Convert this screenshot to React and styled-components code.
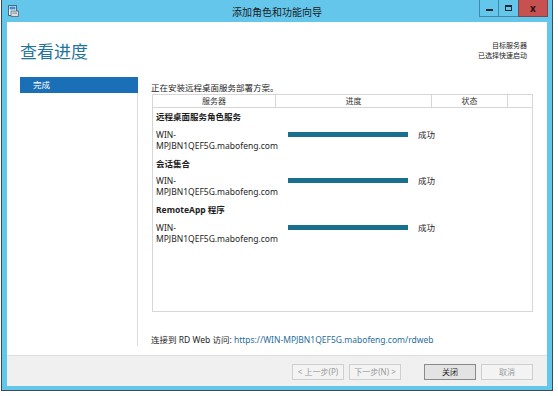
import React from "react";
import styled, { createGlobalStyle } from "styled-components";

const GlobalStyle = createGlobalStyle`
  html, body {
    margin: 0;
    padding: 0;
    background: #ffffff;
  }
  body {
    font-family: "Noto Sans", "Noto Sans CJK SC", sans-serif;
    color: #1e1e1e;
  }
`;

// Window frame
const Window = styled.div`
  width: 550px;
  height: 390px;
  margin-left: 1px;
  border: 1px solid #3d4a50;
  border-top: none;
  background: #65c6ec;
  display: flex;
  flex-direction: column;
`;

const TitleBar = styled.div`
  height: 22px;
  display: grid;
  grid-template-columns: 1fr auto 1fr;
  align-items: start;
`;

const TitleIcon = styled.div`
  padding: 5px 0 0 6px;
  display: flex;
`;

const TitleText = styled.div`
  font-size: 10px;
  line-height: 24px;
  color: #1c1c1c;
`;

const Controls = styled.div`
  display: flex;
  justify-content: flex-end;
  margin-right: 4px;
`;

const CtrlButton = styled.div`
  width: ${({ w }) => w}px;
  height: 17px;
  display: flex;
  align-items: center;
  justify-content: center;
  background: ${({ close }) => (close ? "#c75050" : "transparent")};
  border-left: 1px solid rgba(20, 60, 80, 0.45);
  border-bottom: 1px solid rgba(20, 60, 80, 0.45);
  box-sizing: border-box;
  &:last-child {
    border-right: 1px solid rgba(20, 60, 80, 0.45);
  }
`;

const MinIcon = styled.span`
  width: 7px;
  height: 2px;
  margin-top: 4px;
  background: #1b2a30;
`;

const MaxIcon = styled.span`
  width: 7px;
  height: 6px;
  border: 1px solid #1b2a30;
  border-top-width: 2px;
  box-sizing: border-box;
`;

const CloseX = styled.span`
  font-size: 10px;
  font-weight: 700;
  color: #2a1414;
  line-height: 1;
`;

// Client area
const Client = styled.div`
  flex: 1;
  margin: 0 5px 4px 5px;
  background: #ffffff;
  display: flex;
  flex-direction: column;
`;

const Header = styled.div`
  height: 55px;
  display: flex;
  justify-content: space-between;
  padding: 0 20px 0 13px;
  box-sizing: border-box;
`;

const Heading = styled.h1`
  margin: 21px 0 0 0;
  font-size: 17px;
  line-height: 18px;
  font-weight: 400;
  color: #23749a;
`;

const Target = styled.div`
  margin-top: 19px;
  text-align: right;
  font-size: 7px;
  line-height: 10px;
  color: #222;
`;

const Body = styled.div`
  flex: 1;
  display: flex;
  padding-left: 13px;
`;

const Nav = styled.div`
  width: 117px;
  height: 269px;
  border-right: 1px solid #dcdcdc;
`;

const NavItem = styled.div`
  height: 16px;
  margin-right: -1px;
  padding-left: 13px;
  background: ${({ active }) => (active ? "#1b6fb6" : "transparent")};
  color: ${({ active }) => (active ? "#ffffff" : "#222")};
  font-size: 8.5px;
  line-height: 16px;
`;

const Content = styled.div`
  flex: 1;
  padding: 5px 14px 0 14px;
  display: flex;
  flex-direction: column;
  font-size: 8.5px;
  line-height: 11px;
`;

const Intro = styled.div`
  margin-left: -1px;
`;

const Table = styled.div`
  margin-top: 1px;
  height: 218px;
  border: 1px solid #d6d6d6;
  box-sizing: border-box;
`;

const HeadRow = styled.div`
  display: grid;
  grid-template-columns: 123px 156px 76px 1fr;
  height: 12px;
  border-bottom: 1px solid #d6d6d6;
`;

const HeadCell = styled.div`
  text-align: center;
  font-size: 8px;
  line-height: 11px;
  color: #333;
  border-right: ${({ last }) => (last ? "none" : "1px solid #d6d6d6")};
`;

const Groups = styled.div`
  padding: 3px 0 0 3px;
`;

const Group = styled.div`
  margin-bottom: 7px;
`;

const GroupTitle = styled.div`
  font-weight: 700;
  margin-bottom: 6.5px;
`;

const Row = styled.div`
  display: grid;
  grid-template-columns: 132px 120px auto;
  align-items: start;
`;

const ServerName = styled.div`
  line-height: 11px;
`;

const Bar = styled.div`
  height: 5px;
  margin-top: 3px;
  background: #1a6f8f;
`;

const Status = styled.div`
  margin-left: 10px;
`;

const LinkLine = styled.div`
  margin-top: 22px;
  margin-left: -1px;
`;

const Link = styled.a`
  color: #1f6e9a;
  text-decoration: none;
`;

const Footer = styled.div`
  height: 31px;
  background: #f0f0f0;
  border-top: 1px solid #dedede;
  box-sizing: border-box;
  display: flex;
  justify-content: flex-end;
  align-items: flex-start;
  padding: 8px 14px 0 0;
`;

const Button = styled.div`
  width: 52px;
  height: 16px;
  box-sizing: border-box;
  margin-left: ${({ gap }) => gap}px;
  border: 1px solid ${({ primary, disabled }) =>
    primary ? "#8a8a8a" : disabled ? "#cfcfcf" : "#adadad"};
  background: ${({ primary }) => (primary ? "#e3e3e3" : "#f3f3f3")};
  color: ${({ disabled }) => (disabled ? "#9a9a9a" : "#1e1e1e")};
  font-size: 8px;
  line-height: 14px;
  text-align: center;
`;

const groups = [
  { title: "远程桌面服务角色服务" },
  { title: "会话集合" },
  { title: "RemoteApp 程序" },
];

const AppIcon = () => (
  <svg width="11" height="12" viewBox="0 0 11 12">
    <rect x="0.5" y="0.5" width="8" height="10" fill="#f4f8fb" stroke="#4a6a80" />
    <rect x="1.5" y="1.5" width="6" height="3" fill="#3d8fd0" />
    <rect x="3" y="6" width="7.5" height="5.5" fill="#d8dde2" stroke="#56636d" strokeWidth="0.8" />
    <rect x="4.5" y="7.5" width="4.5" height="1.2" fill="#8b97a1" />
  </svg>
);

export default function App() {
  return (
    <>
      <GlobalStyle />
      <Window>
        <TitleBar>
          <TitleIcon>
            <AppIcon />
          </TitleIcon>
          <TitleText>添加角色和功能向导</TitleText>
          <Controls>
            <CtrlButton w={19}>
              <MinIcon />
            </CtrlButton>
            <CtrlButton w={20}>
              <MaxIcon />
            </CtrlButton>
            <CtrlButton w={30} close>
              <CloseX>x</CloseX>
            </CtrlButton>
          </Controls>
        </TitleBar>
        <Client>
          <Header>
            <Heading>查看进度</Heading>
            <Target>
              <div>目标服务器</div>
              <div>已选择快速启动</div>
            </Target>
          </Header>
          <Body>
            <Nav>
              <NavItem active>完成</NavItem>
            </Nav>
            <Content>
              <Intro>正在安装远程桌面服务部署方案。</Intro>
              <Table>
                <HeadRow>
                  <HeadCell>服务器</HeadCell>
                  <HeadCell>进度</HeadCell>
                  <HeadCell>状态</HeadCell>
                  <HeadCell last />
                </HeadRow>
                <Groups>
                  {groups.map((g) => (
                    <Group key={g.title}>
                      <GroupTitle>{g.title}</GroupTitle>
                      <Row>
                        <ServerName>
                          WIN-
                          <br />
                          MPJBN1QEF5G.mabofeng.com
                        </ServerName>
                        <Bar />
                        <Status>成功</Status>
                      </Row>
                    </Group>
                  ))}
                </Groups>
              </Table>
              <LinkLine>
                连接到 RD Web 访问:{" "}
                <Link href="#">https://WIN-MPJBN1QEF5G.mabofeng.com/rdweb</Link>
              </LinkLine>
            </Content>
          </Body>
          <Footer>
            <Button disabled gap={0}>
              &lt; 上一步(P)
            </Button>
            <Button disabled gap={5}>
              下一步(N) &gt;
            </Button>
            <Button primary gap={23}>
              关闭
            </Button>
            <Button disabled gap={5}>
              取消
            </Button>
          </Footer>
        </Client>
      </Window>
    </>
  );
}
